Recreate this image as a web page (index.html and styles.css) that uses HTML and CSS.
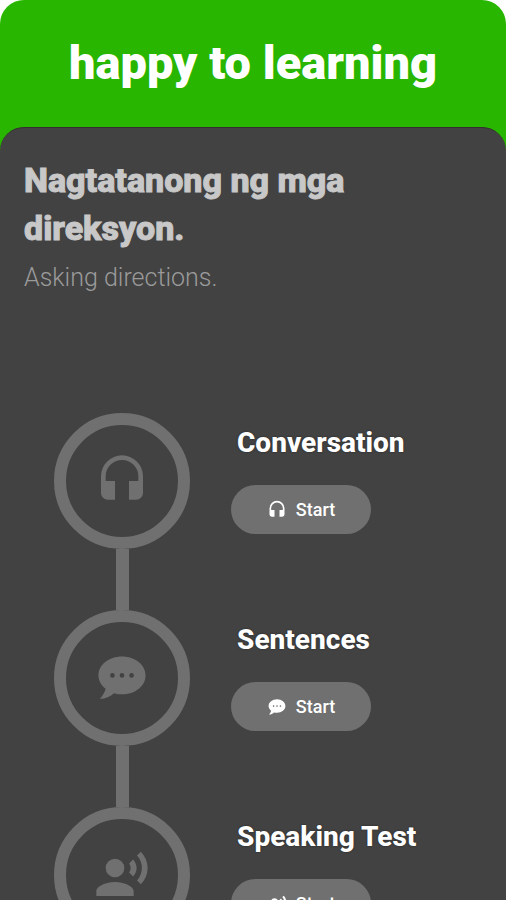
FILE: index.html
```html
<!DOCTYPE html>
<html lang="tl">
<head>
<meta charset="utf-8">
<meta name="viewport" content="width=device-width, initial-scale=1">
<title>happy to learning</title>
<link rel="stylesheet" href="styles.css">
</head>
<body>
<svg class="sprite" aria-hidden="true">
  <symbol id="headset" viewBox="0 0 24 24">
    <path d="M12 1a9 9 0 0 0-9 9v7c0 1.66 1.34 3 3 3h3v-8H5v-2a7 7 0 0 1 14 0v2h-4v8h3c1.66 0 3-1.34 3-3v-7a9 9 0 0 0-9-9z"/>
  </symbol>
  <symbol id="chat" viewBox="0 0 24 24">
    <path fill-rule="evenodd" d="M12 2.8c5.6 0 10.1 3.6 10.1 8.1S17.600 19 12 19c-1.200 0-2.300-.100-3.400-.500C7 19.800 5 20.900 2.500 21c1.100-1.200 2-2.700 2.500-4.400-1.900-1.500-3.100-3.500-3.100-5.700C1.900 6.400 6.400 2.800 12 2.800zM7.900 9.900a1 1 0 1 0 0 2 1 1 0 0 0 0-2zM12 9.900a1 1 0 1 0 0 2 1 1 0 0 0 0-2zM16.100 9.900a1 1 0 1 0 0 2 1 1 0 0 0 0-2z"/>
  </symbol>
  <symbol id="voice" viewBox="0 0 24 24">
    <circle cx="9" cy="9" r="4"/>
    <path d="M9 15c-2.670 0-8 1.340-8 4v2h16v-2c0-2.660-5.330-4-8-4zM16.760 5.360l-1.680 1.690c.84 1.180.84 2.710 0 3.890l1.680 1.690c2.020-2.020 2.020-5.070 0-7.270zM20.070 2l-1.630 1.630c2.770 3.020 2.770 7.560 0 10.740L20.070 16c3.900-3.890 3.910-9.950 0-14z"/>
  </symbol>
</svg>
<div class="app">
  <header class="banner"><h1>happy to learning</h1></header>
  <main class="sheet">
    <h2 class="lesson">Nagtatanong ng mga direksyon.</h2>
    <p class="translation">Asking directions.</p>
    <ol class="steps">
      <li class="step">
        <div class="track"><div class="ring"><svg class="ring-icon" aria-hidden="true"><use href="#headset"/></svg></div></div>
        <div class="info">
          <h3>Conversation</h3>
          <button class="start" type="button"><svg class="start-icon" aria-hidden="true"><use href="#headset"/></svg>Start</button>
        </div>
      </li>
      <li class="step">
        <div class="track"><div class="ring"><svg class="ring-icon" aria-hidden="true"><use href="#chat"/></svg></div></div>
        <div class="info">
          <h3>Sentences</h3>
          <button class="start" type="button"><svg class="start-icon" aria-hidden="true"><use href="#chat"/></svg>Start</button>
        </div>
      </li>
      <li class="step">
        <div class="track"><div class="ring"><svg class="ring-icon" aria-hidden="true"><use href="#voice"/></svg></div></div>
        <div class="info">
          <h3>Speaking Test</h3>
          <button class="start" type="button"><svg class="start-icon" aria-hidden="true"><use href="#voice"/></svg>Start</button>
        </div>
      </li>
    </ol>
  </main>
</div>
</body>
</html>
```
FILE: styles.css
```css
* { box-sizing: border-box; }

body {
  margin: 0;
  background: #fff;
  font-family: Roboto, "Liberation Sans", sans-serif;
}

h1, h2, h3, p, ol { margin: 0; padding: 0; }

.sprite { display: none; }

.app {
  height: 100vh;
  overflow: hidden;
  display: flex;
  flex-direction: column;
  background: #28b600;
  border-radius: 24px 24px 0 0;
}

.banner {
  padding: 31px 16px 32px;
  text-align: center;
  color: #fff;
}

.banner h1 {
  font-size: 47px;
  line-height: 64px;
  font-weight: 900;
}

.sheet {
  flex: 1 0 auto;
  padding: 28px 24px 0;
  background: #424242;
  border-top: 1px solid #352d33;
  border-radius: 24px 24px 0 0;
}

.lesson {
  max-width: 400px;
  font-size: 34px;
  line-height: 48px;
  font-weight: 800;
  color: #c8c8c8;
  -webkit-text-stroke: 1px #c8c8c8;
}

.translation {
  margin-top: 10px;
  font-size: 25px;
  line-height: 32px;
  font-weight: 300;
  color: #9a9a9a;
}

.steps {
  list-style: none;
  margin-top: 119px;
  padding-left: 30px;
}

.step {
  display: flex;
  gap: 41px;
  height: 197px;
}

.track {
  display: flex;
  flex-direction: column;
  align-items: center;
}

.track::after {
  content: "";
  flex: 1;
  width: 13px;
  background: #707070;
}

.ring {
  display: grid;
  place-items: center;
  width: 136px;
  height: 136px;
  border: 12px solid #707070;
  border-radius: 50%;
}

.ring-icon {
  width: 56px;
  height: 56px;
  fill: #707070;
}

.info { padding-top: 12px; }

.info h3 {
  padding-left: 6px;
  font-size: 28px;
  line-height: 36px;
  font-weight: 800;
  color: #fff;
  text-shadow: 0 0 2px #222;
}

.start {
  display: flex;
  align-items: center;
  justify-content: center;
  gap: 9px;
  width: 140px;
  height: 49px;
  margin-top: 24px;
  padding: 0;
  border: 0;
  border-radius: 25px;
  background: #707070;
  color: #fff;
  font: 500 18px/24px Roboto, "Liberation Sans", sans-serif;
}

.start-icon {
  width: 20px;
  height: 20px;
  fill: #fff;
}
```
